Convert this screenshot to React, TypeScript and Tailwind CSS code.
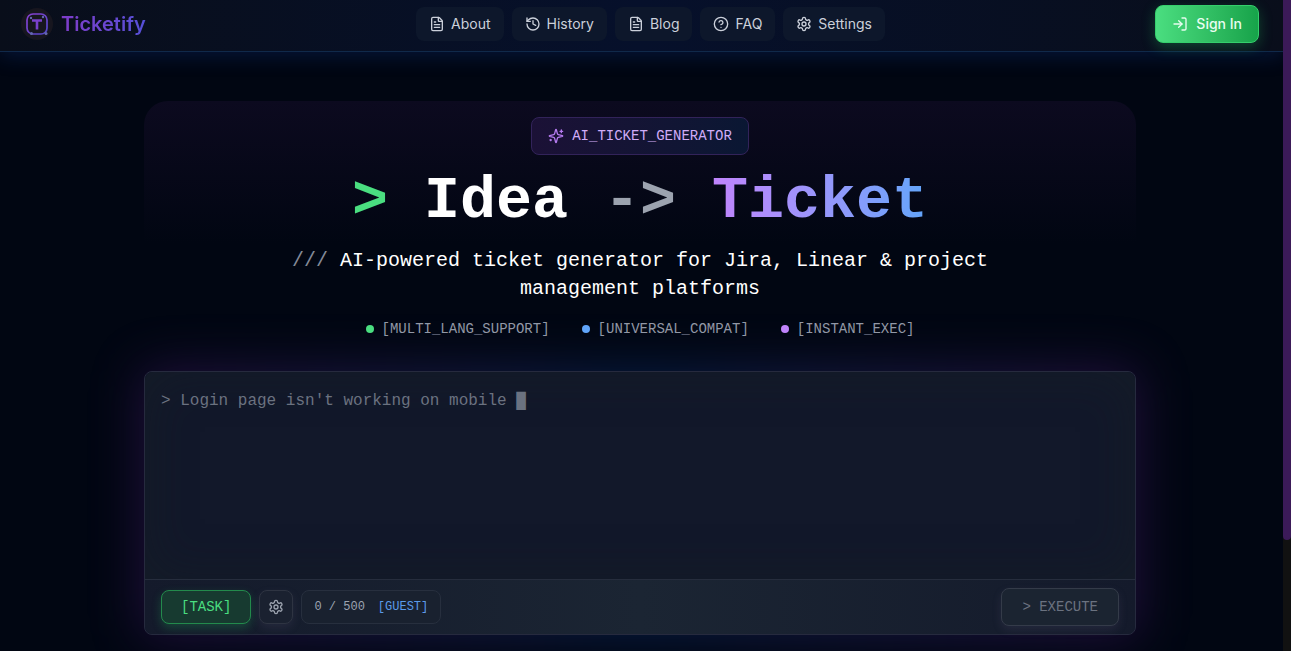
import { useState } from 'react';
import { CircleQuestionMark, FileText, History, LogIn } from 'lucide-react';

function GearIcon({ className }: { className?: string }) {
  return (
    <svg viewBox="0 0 24 24" fill="none" stroke="currentColor" strokeWidth="2" strokeLinecap="round" strokeLinejoin="round" className={className} aria-hidden="true">
      <path d="M12.22 2h-.44a2 2 0 0 0-2 2v.18a2 2 0 0 1-1 1.73l-.43.25a2 2 0 0 1-2 0l-.15-.08a2 2 0 0 0-2.73.73l-.22.38a2 2 0 0 0 .73 2.73l.15.1a2 2 0 0 1 1 1.72v.51a2 2 0 0 1-1 1.74l-.15.09a2 2 0 0 0-.73 2.73l.22.38a2 2 0 0 0 2.73.73l.15-.08a2 2 0 0 1 2 0l.43.25a2 2 0 0 1 1 1.73V20a2 2 0 0 0 2 2h.44a2 2 0 0 0 2-2v-.18a2 2 0 0 1 1-1.73l.43-.25a2 2 0 0 1 2 0l.15.08a2 2 0 0 0 2.73-.73l.22-.39a2 2 0 0 0-.73-2.73l-.15-.08a2 2 0 0 1-1-1.74v-.5a2 2 0 0 1 1-1.74l.15-.09a2 2 0 0 0 .73-2.73l-.22-.38a2 2 0 0 0-2.73-.73l-.15.08a2 2 0 0 1-2 0l-.43-.25a2 2 0 0 1-1-1.73V4a2 2 0 0 0-2-2z" />
      <circle cx="12" cy="12" r="3" />
    </svg>
  );
}

function SparklesIcon({ className }: { className?: string }) {
  return (
    <svg viewBox="0 0 24 24" fill="none" stroke="currentColor" strokeWidth="2" strokeLinecap="round" strokeLinejoin="round" className={className} aria-hidden="true">
      <path d="M9.937 15.5A2 2 0 0 0 8.5 14.063l-6.135-1.582a.5.5 0 0 1 0-.962L8.5 9.936A2 2 0 0 0 9.937 8.5l1.582-6.135a.5.5 0 0 1 .963 0L14.063 8.5A2 2 0 0 0 15.5 9.937l6.135 1.581a.5.5 0 0 1 0 .964L15.5 14.063a2 2 0 0 0-1.437 1.437l-1.582 6.135a.5.5 0 0 1-.963 0z" />
      <path d="M20 3v4M22 5h-4M4 17v2M5 18H3" />
    </svg>
  );
}

const navItems = [
  { label: 'About', href: '#about', icon: FileText },
  { label: 'History', href: '#history', icon: History },
  { label: 'Blog', href: '#blog', icon: FileText },
  { label: 'FAQ', href: '#faq', icon: CircleQuestionMark },
  { label: 'Settings', href: '#settings', icon: GearIcon },
];

const features = [
  { label: '[MULTI_LANG_SUPPORT]', dot: 'bg-[#4ade80]' },
  { label: '[UNIVERSAL_COMPAT]', dot: 'bg-[#60a5fa]' },
  { label: '[INSTANT_EXEC]', dot: 'bg-[#c084fc]' },
];

const MAX_CHARS = 500;

function Logo() {
  return (
    <svg viewBox="0 0 32 32" fill="none" className="size-8" aria-hidden="true">
      <defs>
        <linearGradient id="logo-stroke" x1="5" y1="5" x2="27" y2="27" gradientUnits="userSpaceOnUse">
          <stop stopColor="#8a3fd0" />
          <stop offset="1" stopColor="#5048c8" />
        </linearGradient>
      </defs>
      <circle cx="16" cy="16" r="16" fill="#17161f" />
      <rect x="6" y="6" width="20" height="20" rx="6" stroke="url(#logo-stroke)" strokeWidth="1.7" />
      <path d="M11 12.5h10M16 12.5v9" stroke="#7a40cc" strokeWidth="2.6" />
      <g fill="#6468b0">
        <circle cx="10" cy="10" r="1.2" />
        <circle cx="22" cy="9" r="1.2" />
        <circle cx="10.5" cy="25.5" r="1.5" />
        <circle cx="25" cy="25.5" r="1.5" />
      </g>
    </svg>
  );
}

function Header() {
  return (
    <header className="flex h-[52px] items-center justify-between border-b border-[#10294a] bg-linear-to-r from-[#090e1a] via-[#06102b] to-[#090e1b] px-6 pb-1 shadow-[0_4px_20px_rgba(20,60,150,0.3)]">
      <a href="#home" className="-ml-[3px] flex items-center gap-2">
        <Logo />
        <span className="bg-linear-to-r from-[#7e3bc8] to-[#5550d8] bg-clip-text text-xl font-semibold text-transparent">Ticketify</span>
      </a>
      <nav className="flex gap-2">
        {navItems.map(({ label, href, icon: Icon }) => (
          <a key={label} href={href} className="flex items-center gap-1.5 rounded-lg bg-[#0d172b] px-[13px] py-[7px] text-sm text-[#cbd0da]">
            <Icon className="size-4" />
            {label}
          </a>
        ))}
      </nav>
      <button className="flex items-center gap-2 rounded-lg border border-[#35cf6c] bg-linear-to-r from-[#4ade80] to-[#16a34a] px-4 py-2 text-sm font-medium text-[#e8fdf0] shadow-[0_4px_14px_rgba(34,197,94,0.3)]">
        <LogIn className="size-4" />
        Sign In
      </button>
    </header>
  );
}

function Hero() {
  return (
    <section className="relative z-10 flex flex-col items-center rounded-3xl bg-linear-to-b from-[#0c0a1f] to-transparent to-60% pt-4 text-center font-['Liberation_Mono',monospace]">
      <div className="flex items-center gap-2 rounded-lg border border-[#32235a] bg-linear-to-r from-[#1b1136] to-[#0a1733] px-4 py-2 text-sm text-[#d0acf8]">
        <SparklesIcon className="size-4 text-[#b57bf0]" />
        AI_TICKET_GENERATOR
      </div>
      <h1 className="mt-4 text-[60px] leading-[60px] font-bold text-white">
        <span className="text-[#4ade80]">&gt;</span> Idea <span className="text-[#9ca3af]">-&gt;</span>{' '}
        <span className="bg-linear-to-r from-[#c084fc] to-[#60a5fa] bg-clip-text text-transparent">Ticket</span>
      </h1>
      <p className="mt-4 max-w-3xl text-xl text-white">
        <span className="text-[#848a98]">///</span> AI-powered ticket generator for Jira, Linear &amp; project management platforms
      </p>
      <ul className="mt-4 flex flex-wrap justify-center gap-x-8 gap-y-2 text-sm text-[#9298a6]">
        {features.map((feature) => (
          <li key={feature.label} className="flex items-center gap-2">
            <span className={`size-2 rounded-full ${feature.dot}`} />
            {feature.label}
          </li>
        ))}
      </ul>
    </section>
  );
}

function TicketForm() {
  const [text, setText] = useState('');

  return (
    <div className="relative mt-8">
      {/* Glow behind the card */}
      <div className="absolute -inset-1 rounded-2xl bg-linear-to-r from-[#2b1148] via-[#082452] to-[#2b1148] opacity-70 blur-xl" />
      <form
        onSubmit={(e) => e.preventDefault()}
        className="relative rounded-lg border border-[#262a3e] bg-[#111729] font-['Liberation_Mono',monospace]"
      >
        <textarea
          aria-label="Describe your ticket"
          value={text}
          onChange={(e) => setText(e.target.value)}
          maxLength={MAX_CHARS}
          placeholder="> Login page isn't working on mobile █"
          className="block h-[207px] w-full resize-none rounded-t-lg bg-[#12182a] p-4 text-base leading-[26px] text-white shadow-[inset_0_0_50px_rgba(24,34,34,0.4)] outline-none placeholder:text-[#6b7280]"
        />
        <div className="flex items-center justify-between rounded-b-lg border-t border-[#262d3d] bg-linear-to-r from-[#141a2b] via-[#1b2533] to-[#141a2b] px-4 py-2">
          <div className="flex items-center gap-2">
            <button type="button" className="h-[34px] rounded-lg border border-[#238a4c] bg-[#173a30] px-[19px] text-sm text-[#4ade80] shadow-[0_4px_10px_rgba(34,197,94,0.25)]">
              [TASK]
            </button>
            <button type="button" aria-label="Options" className="flex size-[34px] items-center justify-center rounded-lg border border-[#2e3442] bg-[#1a2130] text-[#9ca3af] shadow-[0_4px_10px_rgba(120,110,150,0.15)]">
              <GearIcon className="size-4" />
            </button>
            <div className="flex h-[34px] items-center gap-[13px] rounded-lg border border-[#272f3e] bg-[#19212f] px-3 text-xs text-[#9ca3af]">
              <span>{text.length} / {MAX_CHARS}</span>
              <span className="text-[#5b9bea]">[GUEST]</span>
            </div>
          </div>
          <button type="submit" disabled={!text} className="h-[38px] rounded-lg border border-[#343b49] bg-[#1b2431] px-5 text-sm text-[#6b7280] shadow-[0_4px_10px_rgba(120,110,150,0.15)]">
            &gt; EXECUTE
          </button>
        </div>
      </form>
    </div>
  );
}

export default function App() {
  return (
    <div className="flex h-screen overflow-hidden bg-[#010612] font-[Inter,sans-serif]">
      <div className="min-w-0 flex-1">
        <Header />
        <main className="mx-auto mt-[49px] max-w-[1027px] pr-[19px] pl-4">
          <Hero />
          <TicketForm />
        </main>
      </div>
      <div className="relative w-2 bg-[#111111]">
        <div className="h-[83%] rounded-b-full bg-[#3b1a58]" />
      </div>
    </div>
  );
}
